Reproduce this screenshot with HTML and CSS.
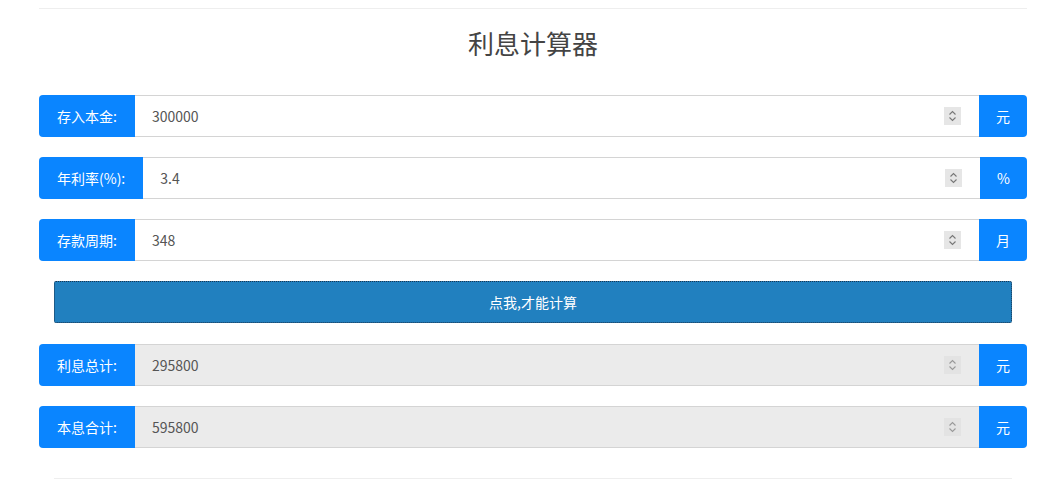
FILE: index.html
```html
<!DOCTYPE html>
<html lang="zh">
<head>
<meta charset="utf-8">
<title>利息计算器</title>
<link rel="stylesheet" href="styles.css">
</head>
<body>
<div class="container">
  <hr class="rule-top">
  <h2 class="title">利息计算器</h2>
  <div class="form">
    <div class="group">
      <span class="label">存入本金:</span>
      <div class="field"><span class="value">300000</span><span class="spin"><svg width="17" height="18" viewBox="0 0 17 18"><rect width="17" height="18" fill="#e6e6e6"/><path d="M5.5 7.5 L8.5 4.5 L11.5 7.5 M5.5 10.5 L8.5 13.5 L11.5 10.5" fill="none" stroke="#777" stroke-width="1.1"/></svg></span></div>
      <span class="addon">元</span>
    </div>
    <div class="group">
      <span class="label">年利率(%):</span>
      <div class="field"><span class="value">3.4</span><span class="spin"><svg width="17" height="18" viewBox="0 0 17 18"><rect width="17" height="18" fill="#e6e6e6"/><path d="M5.5 7.5 L8.5 4.5 L11.5 7.5 M5.5 10.5 L8.5 13.5 L11.5 10.5" fill="none" stroke="#777" stroke-width="1.1"/></svg></span></div>
      <span class="addon">%</span>
    </div>
    <div class="group">
      <span class="label">存款周期:</span>
      <div class="field"><span class="value">348</span><span class="spin"><svg width="17" height="18" viewBox="0 0 17 18"><rect width="17" height="18" fill="#e6e6e6"/><path d="M5.5 7.5 L8.5 4.5 L11.5 7.5 M5.5 10.5 L8.5 13.5 L11.5 10.5" fill="none" stroke="#777" stroke-width="1.1"/></svg></span></div>
      <span class="addon">月</span>
    </div>
    <div class="btn-wrap">
      <button class="btn" type="button">点我,才能计算</button>
    </div>
    <div class="group">
      <span class="label">利息总计:</span>
      <div class="field disabled"><span class="value">295800</span><span class="spin"><svg width="17" height="18" viewBox="0 0 17 18"><rect width="17" height="18" fill="#e3e3e3"/><path d="M5.5 7.5 L8.5 4.5 L11.5 7.5 M5.5 10.5 L8.5 13.5 L11.5 10.5" fill="none" stroke="#999" stroke-width="1.1"/></svg></span></div>
      <span class="addon">元</span>
    </div>
    <div class="group">
      <span class="label">本息合计:</span>
      <div class="field disabled"><span class="value">595800</span><span class="spin"><svg width="17" height="18" viewBox="0 0 17 18"><rect width="17" height="18" fill="#e3e3e3"/><path d="M5.5 7.5 L8.5 4.5 L11.5 7.5 M5.5 10.5 L8.5 13.5 L11.5 10.5" fill="none" stroke="#999" stroke-width="1.1"/></svg></span></div>
      <span class="addon">元</span>
    </div>
  </div>
  <hr class="rule-bottom">
</div>
</body>
</html>
```
FILE: styles.css
```css
* { box-sizing: border-box; }
body {
  margin: 0;
  background: #fff;
  font-family: "Noto Sans CJK SC", "Noto Sans", "Liberation Sans", sans-serif;
  color: #555;
  font-size: 14px;
}
.container {
  width: 988px;
  margin-left: 39px;
  padding-top: 8px;
}
.rule-top {
  margin: 0;
  border: 0;
  border-top: 1px solid #eee;
}
.title {
  margin: 18px 0 36px;
  height: 32px;
  line-height: 32px;
  text-align: center;
  font-size: 26px;
  font-weight: normal;
  color: #444;
}
.form {
  display: flex;
  flex-direction: column;
  gap: 20px;
}
.group {
  display: flex;
  height: 42px;
}
.label, .addon {
  display: flex;
  align-items: center;
  justify-content: center;
  padding: 0 18px;
  background: #0a85ff;
  color: #fff;
  font-size: 14px;
  white-space: nowrap;
}
.label { border-radius: 4px 0 0 4px; }
.addon { border-radius: 0 4px 4px 0; padding: 0 17px; }
.field {
  flex: 1;
  display: flex;
  align-items: center;
  padding: 0 18px 0 17px;
  background: #fff;
  border-top: 1px solid #d4d4d4;
  border-bottom: 1px solid #d4d4d4;
  color: #555;
}
.field.disabled { background: #ebebeb; }
.value { flex: 1; }
.spin { display: flex; }
.btn-wrap {
  padding: 0 15px;
  margin-bottom: 1px;
}
.btn {
  width: 100%;
  height: 42px;
  background: #2180bf;
  color: #fff;
  font-family: inherit;
  font-size: 14px;
  border: 1px dotted #1a3550;
  border-radius: 2px;
  cursor: pointer;
}
.rule-bottom {
  margin: 30px 15px 0;
  border: 0;
  border-top: 1px solid #eee;
}
```
